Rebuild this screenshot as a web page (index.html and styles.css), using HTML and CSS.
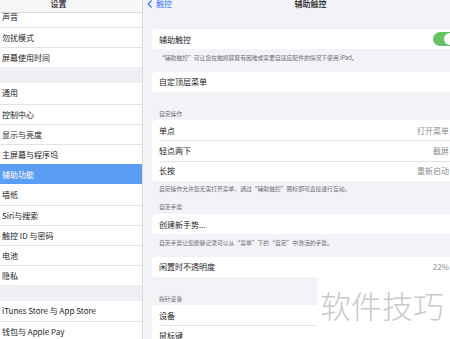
FILE: index.html
```html
<!doctype html>
<html lang="zh-CN">
<head>
    <meta charset="utf-8">
    <title>辅助触控</title>
    <link rel="stylesheet" href="styles.css">
</head>
<body>
    <div class="page">
        <!-- 左侧设置列表 -->
        <aside class="sidebar">
            <div class="side-head">设置</div>
            <ul class="side-group side-group-first">
                <li>声音</li>
                <li>勿扰模式</li>
                <li>屏幕使用时间</li>
            </ul>
            <ul class="side-group">
                <li>通用</li>
                <li>控制中心</li>
                <li>显示与亮度</li>
                <li>主屏幕与程序坞</li>
                <li class="active">辅助功能</li>
                <li>墙纸</li>
                <li>Siri与搜索</li>
                <li>触控 ID 与密码</li>
                <li>电池</li>
                <li>隐私</li>
            </ul>
            <ul class="side-group side-group-last">
                <li>iTunes Store 与 App Store</li>
                <li>钱包与 Apple Pay</li>
            </ul>
        </aside>

        <!-- 右侧详情 -->
        <main class="detail">
            <div class="nav">
                <span class="back">
                    <svg width="5" height="8" viewBox="0 0 5 8"><path d="M4.2 0.8 L1.2 4 L4.2 7.2" fill="none" stroke="#3478f6" stroke-width="1.2" stroke-linecap="round" stroke-linejoin="round"/></svg>
                    触控
                </span>
                <span class="nav-title">辅助触控</span>
                <span></span>
            </div>

            <section class="group group-top">
                <div class="card">
                    <div class="row">
                        <span class="label">辅助触控</span>
                        <span class="switch"><span class="knob"></span></span>
                    </div>
                </div>
                <p class="note">“辅助触控”可让您在触摸屏幕有困难或需要自适应配件的情况下使用 iPad。</p>
            </section>

            <section class="group group-plain">
                <div class="card">
                    <div class="row">
                        <span class="label">自定顶层菜单</span>
                        <span class="chev"></span>
                    </div>
                </div>
            </section>

            <section class="group">
                <h4 class="group-title">自定操作</h4>
                <div class="card">
                    <div class="row">
                        <span class="label">单点</span>
                        <span class="value">打开菜单</span>
                        <span class="chev"></span>
                    </div>
                    <div class="row">
                        <span class="label">轻点两下</span>
                        <span class="value">截屏</span>
                        <span class="chev"></span>
                    </div>
                    <div class="row">
                        <span class="label">长按</span>
                        <span class="value">重新启动</span>
                        <span class="chev"></span>
                    </div>
                </div>
                <p class="note">自定操作允许您无需打开菜单，通过“辅助触控”图标即可直接进行互动。</p>
            </section>

            <section class="group">
                <h4 class="group-title">自定手势</h4>
                <div class="card">
                    <div class="row">
                        <span class="label">创建新手势...</span>
                        <span class="chev"></span>
                    </div>
                </div>
                <p class="note">自定手势让您能够记录可以从“菜单”下的“自定”中激活的手势。</p>
            </section>

            <section class="group group-plain">
                <div class="card">
                    <div class="row">
                        <span class="label">闲置时不透明度</span>
                        <span class="value">22%</span>
                        <span class="chev"></span>
                    </div>
                </div>
            </section>

            <section class="group">
                <h4 class="group-title">指针设备</h4>
                <div class="card">
                    <div class="row">
                        <span class="label">设备</span>
                        <span class="chev"></span>
                    </div>
                    <div class="row">
                        <span class="label">鼠标键</span>
                        <span class="chev"></span>
                    </div>
                </div>
            </section>
        </main>
    </div>

    <!-- 水印 -->
    <div class="watermark">软件技巧</div>
</body>
</html>
```

FILE: styles.css
```css
* {
    padding: 0;
    margin: 0;
    list-style: none;
    border: 0;
    box-sizing: border-box;
}

html, body {
    width: 450px;
    height: 339px;
    overflow: hidden;
}

body {
    font-family: "Noto Sans CJK SC", "Noto Sans", sans-serif;
    font-size: 8px;
    color: #1c1c1e;
    background: #f2f2f7;
    position: relative;
}

.page {
    display: flex;
    width: 499px;
    height: 339px;
    margin-left: -25px;
}

/* 左侧 */
.sidebar {
    width: 168px;
    flex: none;
    background: #efeff4;
    border-right: 1px solid #dcdce0;
}

.side-head {
    position: relative;
    z-index: 1;
    height: 13px;
    line-height: 7px;
    text-align: center;
    background: #f7f7f8;
    border-bottom: 1px solid #d9d9dd;
    font-weight: 500;
}

.side-group {
    background: #fff;
    margin-top: 16px;
}

.side-group-first {
    margin-top: -6.1px;
}

.side-group-last {
    margin-top: 15.5px;
}

.side-group li {
    height: 20.2px;
    line-height: 20.2px;
    padding-left: 27px;
    white-space: nowrap;
}

.side-group li + li {
    border-top: 1px solid #e4e4e8;
}

.side-group li.active {
    background: #5a9df4;
    color: #fff;
    border-top-color: #5a9df4;
}

.side-group li.active + li {
    border-top-color: transparent;
}

/* 右侧 */
.detail {
    width: 331px;
    flex: none;
    padding: 0 9px;
    background: #f2f2f7;
}

.nav {
    display: grid;
    grid-template-columns: 1fr auto 1fr;
    height: 13px;
    line-height: 7px;
    margin: 0 -9px;
    padding-left: 4px;
}

.back {
    display: flex;
    align-items: center;
    height: 7px;
    gap: 4px;
    color: #3478f6;
}

.nav-title {
    font-weight: 500;
}

.group {
    margin-top: 10px;
}

.group-top {
    margin-top: 16px;
}

.group-plain {
    padding-bottom: 7.5px;
}

.group-title {
    font-size: 5.8px;
    font-weight: normal;
    line-height: 8px;
    color: #6d6d72;
    padding: 0 7px 2.5px;
}

.card {
    background: #fff;
    border-radius: 4px;
}

.row {
    display: flex;
    align-items: center;
    height: 20.3px;
    padding: 0 8px 0 7px;
    position: relative;
}

.row + .row::before {
    content: "";
    position: absolute;
    left: 7px;
    right: 0;
    top: 0;
    border-top: 1px solid #e2e2e6;
}

.label {
    flex: 1;
    white-space: nowrap;
}

.value {
    color: #8e8e93;
}

.chev {
    width: 4px;
    height: 4px;
    margin-left: 4px;
    border-top: 1px solid #c4c4c7;
    border-right: 1px solid #c4c4c7;
    transform: rotate(45deg);
}

.switch {
    width: 24px;
    height: 14px;
    border-radius: 7px;
    background: #65c466;
    display: flex;
    justify-content: flex-end;
    padding: 1px;
}

.knob {
    width: 12px;
    height: 12px;
    border-radius: 50%;
    background: #fff;
}

.note {
    font-size: 5.8px;
    line-height: 8px;
    color: #6d6d72;
    padding: 4.5px 7px 0;
    white-space: nowrap;
}

/* 水印 */
.watermark {
    position: absolute;
    left: 317px;
    top: 270px;
    width: 140px;
    height: 69px;
    background: #fff;
    padding: 18.5px 0 0 3px;
    font-size: 31px;
    line-height: 31px;
    font-weight: 300;
    color: #cacaca;
    white-space: nowrap;
}
```
